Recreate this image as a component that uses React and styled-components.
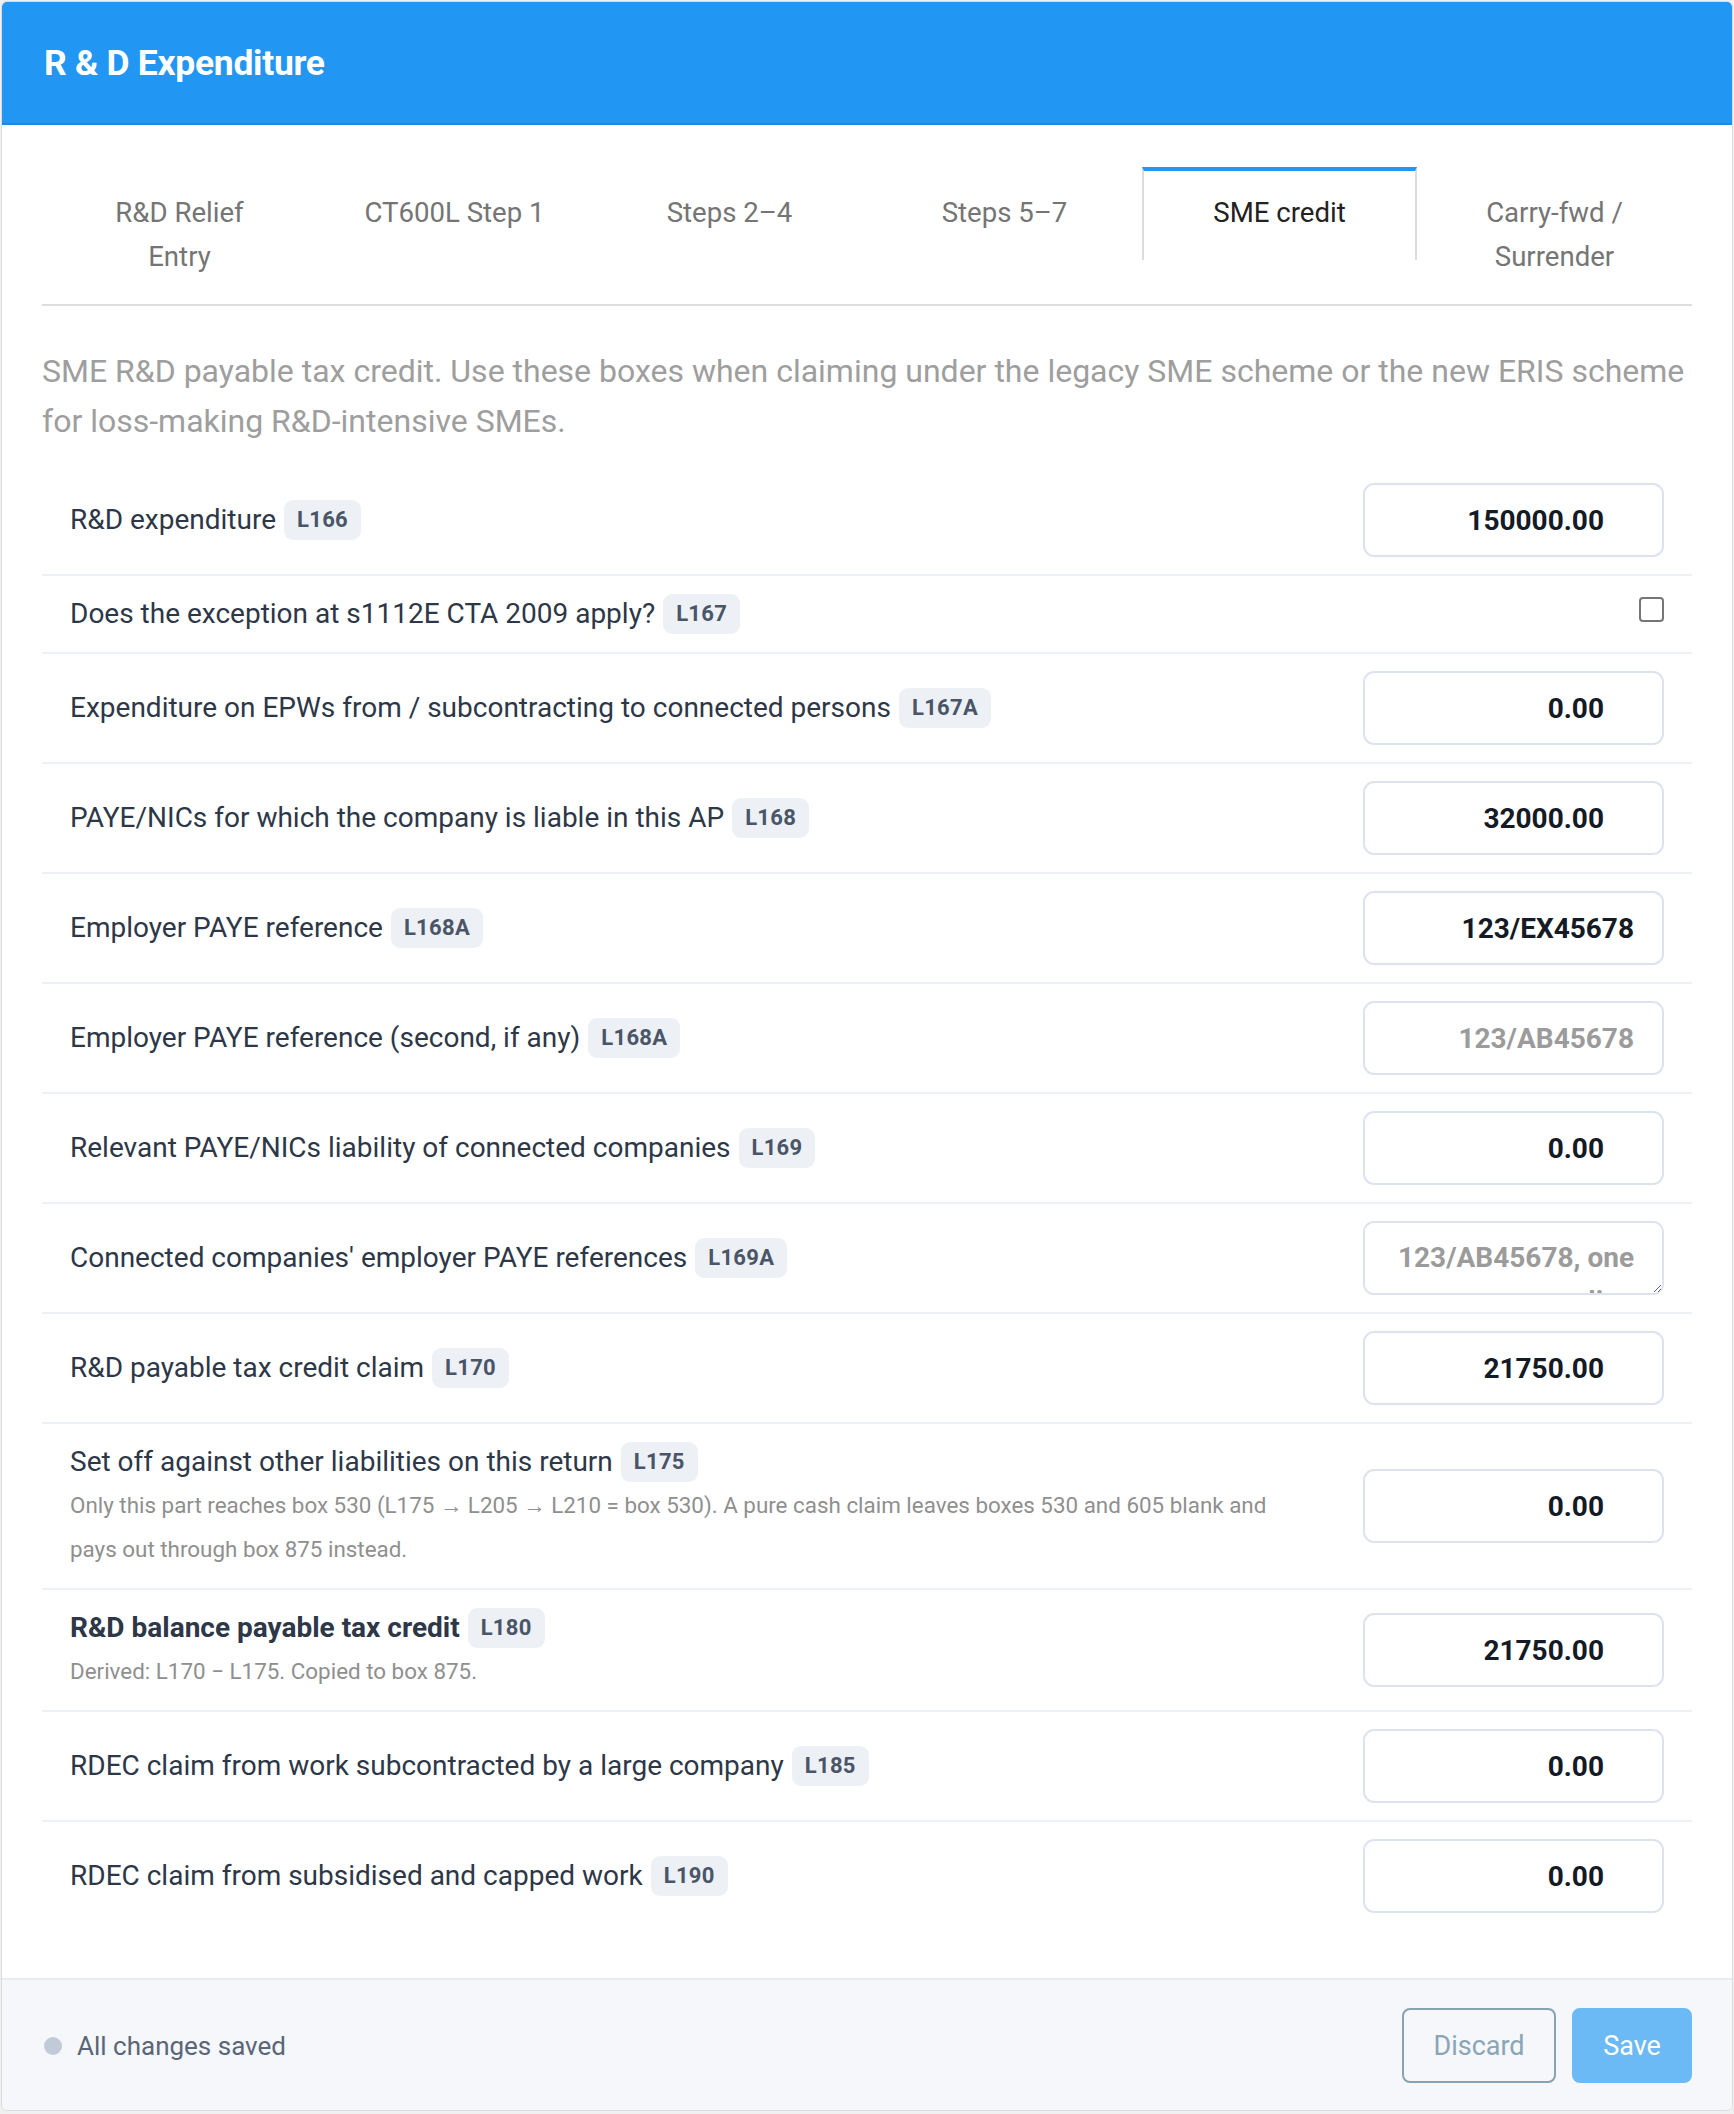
import React, { useState } from 'react';
import styled, { createGlobalStyle } from 'styled-components';

const GlobalStyle = createGlobalStyle`
  * { box-sizing: border-box; }
  body {
    margin: 0;
    background: #f0f0f0;
    font-family: Roboto, "Noto Sans", Arial, sans-serif;
    color: #2d3748;
  }
`;

const Page = styled.div`
  padding: 1px;
`;

const Card = styled.div`
  background: #fff;
  border: 1px solid #dcdcdc;
  border-radius: 6px;
  overflow: hidden;
`;

const Header = styled.header`
  height: 123px;
  display: flex;
  align-items: center;
  padding: 0 42px;
  background: #2196f3;
  border-bottom: 2px solid #1e88e5;
`;

const Title = styled.h1`
  margin: 0;
  font-size: 35.5px;
  font-weight: 700;
  color: #fff;
  letter-spacing: -0.3px;
`;

const Body = styled.div`
  padding: 42px 40px 46px;
`;

const TabList = styled.div`
  display: flex;
  align-items: flex-start;
  border-bottom: 2px solid #dedede;
`;

const Tab = styled.button`
  flex: 1;
  padding: 20px 40px 25px;
  border: 0;
  border-top: 4px solid ${p => (p.$active ? '#2196f3' : 'transparent')};
  border-left: 2px solid ${p => (p.$active ? '#dcdcdc' : 'transparent')};
  border-right: 2px solid ${p => (p.$active ? '#dcdcdc' : 'transparent')};
  background: #fff;
  font-family: inherit;
  font-size: 27.6px;
  line-height: 44px;
  color: ${p => (p.$active ? '#222' : '#757575')};
  text-align: center;
  cursor: pointer;
`;

const Intro = styled.p`
  margin: 40px 0 20px;
  font-size: 32px;
  line-height: 50px;
  color: #9e9e9e;
`;

const Row = styled.div`
  display: flex;
  align-items: center;
  gap: 60px;
  padding: 17px 28px;
  border-bottom: 2px solid ${p => (p.$last ? 'transparent' : '#edf0f4')};
`;

const LabelCol = styled.div`
  flex: 1;
  min-width: 0;
`;

const Label = styled.div`
  font-size: 28px;
  line-height: 42px;
  font-weight: ${p => (p.$strong ? 700 : 400)};
  color: #2d3748;
`;

const Badge = styled.span`
  display: inline-block;
  vertical-align: middle;
  margin-left: 8px;
  margin-top: -4px;
  height: 40px;
  padding: 0 13px;
  border-radius: 9px;
  background: #edf1f6;
  color: #4a5568;
  font-size: 22px;
  font-weight: 700;
  line-height: 40px;
  letter-spacing: 0.3px;
`;

const Hint = styled.div`
  font-size: 22.4px;
  line-height: 44px;
  color: #8f8f8f;
`;

const Control = styled.div`
  width: 301px;
  flex: none;
  display: flex;
  justify-content: flex-end;
`;

const Field = styled.input`
  width: 100%;
  height: 74px;
  padding: 0 ${p => (p.$numeric ? '58px' : '28px')} 0 20px;
  border: 2px solid #dde3ee;
  border-radius: 11px;
  background: #fff;
  font-family: inherit;
  font-size: 28px;
  font-weight: 700;
  color: #141a26;
  text-align: right;
  outline: none;

  &::placeholder {
    color: #9b9b9b;
  }
`;

const Area = styled.textarea`
  width: 100%;
  height: 74px;
  padding: 13px 28px 0 20px;
  border: 2px solid #dde3ee;
  border-radius: 11px;
  background: #fff;
  font-family: inherit;
  font-size: 28px;
  line-height: 44px;
  font-weight: 700;
  color: #141a26;
  text-align: right;
  outline: none;

  &::placeholder {
    color: #9b9b9b;
  }
`;

const Check = styled.input`
  appearance: none;
  width: 25px;
  height: 25px;
  margin: -10px 0 0;
  border: 2px solid #767676;
  border-radius: 4px;
  background: #fff;
  cursor: pointer;

  &:checked {
    background: #2196f3;
    border-color: #2196f3;
  }
`;

const Footer = styled.footer`
  display: flex;
  align-items: center;
  justify-content: space-between;
  padding: 28px 40px 27px 42px;
  background: #f5f7fb;
  border-top: 2px solid #e8edf3;
`;

const Status = styled.div`
  display: flex;
  align-items: center;
  gap: 15px;
  font-size: 26px;
  color: #5a6677;
`;

const Dot = styled.span`
  width: 18px;
  height: 18px;
  border-radius: 50%;
  background: #c1cbd7;
`;

const Actions = styled.div`
  display: flex;
  gap: 16px;
`;

const Button = styled.button`
  height: 75px;
  padding: 0 ${p => (p.$primary ? '22px' : '28px')};
  min-width: ${p => (p.$primary ? '120px' : '154px')};
  border-radius: 8px;
  border: 2px solid ${p => (p.$primary ? '#6bb9f5' : '#87a2b2')};
  background: ${p => (p.$primary ? '#6bb9f5' : 'transparent')};
  color: ${p => (p.$primary ? '#fff' : '#8aa5b5')};
  font-family: inherit;
  font-size: 27px;
  cursor: pointer;
`;

const tabs = ['R&D Relief Entry', 'CT600L Step 1', 'Steps 2–4', 'Steps 5–7', 'SME credit', 'Carry-fwd / Surrender'];

const rows = [
  { label: 'R&D expenditure', box: 'L166', type: 'num', value: '150000.00' },
  { label: 'Does the exception at s1112E CTA 2009 apply?', box: 'L167', type: 'check' },
  { label: 'Expenditure on EPWs from / subcontracting to connected persons', box: 'L167A', type: 'num', value: '0.00' },
  { label: 'PAYE/NICs for which the company is liable in this AP', box: 'L168', type: 'num', value: '32000.00' },
  { label: 'Employer PAYE reference', box: 'L168A', type: 'text', value: '123/EX45678' },
  { label: 'Employer PAYE reference (second, if any)', box: 'L168A', type: 'text', value: '', placeholder: '123/AB45678' },
  { label: 'Relevant PAYE/NICs liability of connected companies', box: 'L169', type: 'num', value: '0.00' },
  { label: "Connected companies' employer PAYE references", box: 'L169A', type: 'area', placeholder: '123/AB45678, one per line' },
  { label: 'R&D payable tax credit claim', box: 'L170', type: 'num', value: '21750.00' },
  {
    label: 'Set off against other liabilities on this return',
    box: 'L175',
    type: 'num',
    value: '0.00',
    hint: 'Only this part reaches box 530 (L175 → L205 → L210 = box 530). A pure cash claim leaves boxes 530 and 605 blank and pays out through box 875 instead.',
  },
  {
    label: 'R&D balance payable tax credit',
    box: 'L180',
    type: 'num',
    value: '21750.00',
    strong: true,
    hint: 'Derived: L170 − L175. Copied to box 875.',
  },
  { label: 'RDEC claim from work subcontracted by a large company', box: 'L185', type: 'num', value: '0.00' },
  { label: 'RDEC claim from subsidised and capped work', box: 'L190', type: 'num', value: '0.00' },
];

function FieldControl({ row }) {
  if (row.type === 'check') return <Check type="checkbox" />;
  if (row.type === 'area') return <Area placeholder={row.placeholder} />;
  return (
    <Field
      type="text"
      inputMode={row.type === 'num' ? 'decimal' : 'text'}
      $numeric={row.type === 'num'}
      defaultValue={row.value}
      placeholder={row.placeholder}
    />
  );
}

export default function App() {
  const [active, setActive] = useState(4);

  return (
    <>
      <GlobalStyle />
      <Page>
        <Card>
          <Header>
            <Title>R &amp; D Expenditure</Title>
          </Header>
          <Body>
            <TabList>
              {tabs.map((t, i) => (
                <Tab key={t} $active={i === active} onClick={() => setActive(i)}>
                  {t}
                </Tab>
              ))}
            </TabList>
            <Intro>
              SME R&amp;D payable tax credit. Use these boxes when claiming under the legacy SME scheme or the new ERIS
              scheme for loss-making R&amp;D-intensive SMEs.
            </Intro>
            {rows.map((r, i) => (
              <Row key={i} $last={i === rows.length - 1}>
                <LabelCol>
                  <Label $strong={r.strong}>
                    {r.label}
                    <Badge>{r.box}</Badge>
                  </Label>
                  {r.hint && <Hint>{r.hint}</Hint>}
                </LabelCol>
                <Control>
                  <FieldControl row={r} />
                </Control>
              </Row>
            ))}
          </Body>
          <Footer>
            <Status>
              <Dot />
              All changes saved
            </Status>
            <Actions>
              <Button>Discard</Button>
              <Button $primary>Save</Button>
            </Actions>
          </Footer>
        </Card>
      </Page>
    </>
  );
}
